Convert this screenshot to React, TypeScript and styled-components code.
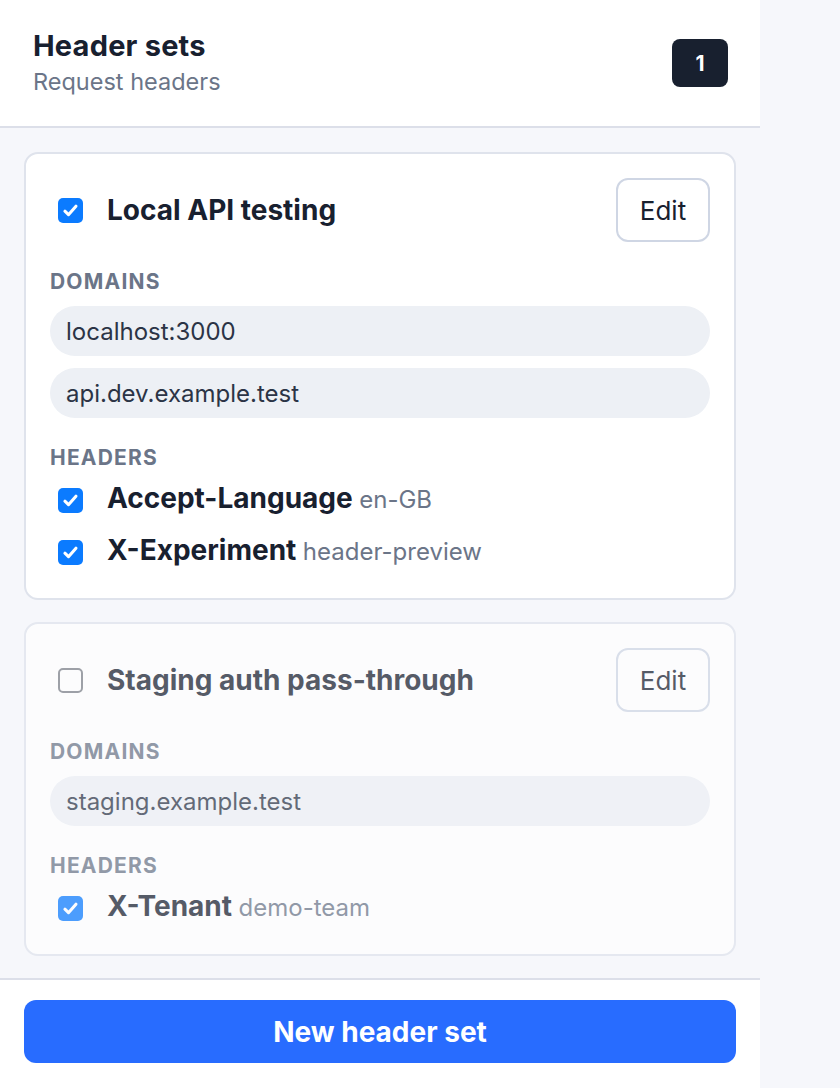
import styled, { createGlobalStyle } from 'styled-components';

const GlobalStyle = createGlobalStyle`
  html, body {
    margin: 0;
    padding: 0;
    background: #f6f7fb;
    font-family: Inter, 'Noto Sans', sans-serif;
    color: #1a2233;
  }
  * { box-sizing: border-box; }
`;

interface HeaderItem {
  name: string;
  value: string;
  enabled: boolean;
}

interface HeaderSet {
  title: string;
  enabled: boolean;
  domains: string[];
  headers: HeaderItem[];
}

const sets: HeaderSet[] = [
  {
    title: 'Local API testing',
    enabled: true,
    domains: ['localhost:3000', 'api.dev.example.test'],
    headers: [
      { name: 'Accept-Language', value: 'en-GB', enabled: true },
      { name: 'X-Experiment', value: 'header-preview', enabled: true },
    ],
  },
  {
    title: 'Staging auth pass-through',
    enabled: false,
    domains: ['staging.example.test'],
    headers: [{ name: 'X-Tenant', value: 'demo-team', enabled: true }],
  },
];

function Check({ checked }: { checked: boolean }) {
  return (
    <CheckBox checked={checked}>
      {checked && (
        <svg width="19" height="19" viewBox="0 0 16 16" fill="none">
          <path
            d="M3.3 8.6l3 2.9 6.3-7.1"
            stroke="white"
            strokeWidth="2.6"
            strokeLinecap="round"
            strokeLinejoin="round"
          />
        </svg>
      )}
    </CheckBox>
  );
}

export default function App() {
  const activeCount = sets.filter((s) => s.enabled).length;

  return (
    <>
      <GlobalStyle />
      <Sidebar>
        <Header>
          <div>
            <Title>Header sets</Title>
            <Subtitle>Request headers</Subtitle>
          </div>
          <Badge>{activeCount}</Badge>
        </Header>

        <List>
          {sets.map((set) => (
            <Card key={set.title} muted={!set.enabled}>
              <CardTop>
                <Check checked={set.enabled} />
                <CardTitle>{set.title}</CardTitle>
                <EditButton>Edit</EditButton>
              </CardTop>

              <Section>
                <SectionLabel>Domains</SectionLabel>
                <Pills>
                  {set.domains.map((d) => (
                    <Pill key={d}>{d}</Pill>
                  ))}
                </Pills>
              </Section>

              <Section>
                <SectionLabel>Headers</SectionLabel>
                <Rows>
                  {set.headers.map((h) => (
                    <HeaderRow key={h.name}>
                      <Check checked={h.enabled} />
                      <HeaderText>
                        <HeaderName>{h.name}</HeaderName> <HeaderValue>{h.value}</HeaderValue>
                      </HeaderText>
                    </HeaderRow>
                  ))}
                </Rows>
              </Section>
            </Card>
          ))}
        </List>

        <Footer>
          <PrimaryButton>New header set</PrimaryButton>
        </Footer>
      </Sidebar>
    </>
  );
}

const Sidebar = styled.div`
  width: 760px;
  height: 1088px;
  display: flex;
  flex-direction: column;
  background: #f6f7fb;
`;

const Header = styled.header`
  height: 128px;
  flex-shrink: 0;
  background: #ffffff;
  border-bottom: 2px solid #dcdfe9;
  display: flex;
  align-items: center;
  justify-content: space-between;
  padding: 0 32px 0 33px;
`;

const Title = styled.h1`
  margin: 0;
  font-size: 29px;
  line-height: 34px;
  font-weight: 700;
  color: #18202f;
  letter-spacing: 0.2px;
`;

const Subtitle = styled.div`
  margin-top: 4px;
  font-size: 23.5px;
  line-height: 30px;
  color: #6b7588;
`;

const Badge = styled.div`
  width: 56px;
  height: 48px;
  border-radius: 8px;
  background: #18202f;
  color: #ffffff;
  font-size: 21px;
  font-weight: 700;
  display: flex;
  align-items: center;
  justify-content: center;
`;

const List = styled.div`
  flex: 1;
  min-height: 0;
  display: flex;
  flex-direction: column;
  gap: 22px;
  padding: 24px 24px;
`;

const Card = styled.section<{ muted: boolean }>`
  background: #ffffff;
  border: 2px solid #dfe3ec;
  border-radius: 14px;
  padding: 24px;
  opacity: ${({ muted }) => (muted ? 0.72 : 1)};
`;

const CardTop = styled.div`
  display: flex;
  align-items: center;
  gap: 24px;
  padding-left: 8px;
  height: 64px;
`;

const CheckBox = styled.span<{ checked: boolean }>`
  width: 25px;
  height: 25px;
  flex-shrink: 0;
  border-radius: 5px;
  display: flex;
  align-items: center;
  justify-content: center;
  background: ${({ checked }) => (checked ? '#0b7bff' : '#ffffff')};
  border: ${({ checked }) => (checked ? 'none' : '2px solid #7b7f87')};
`;

const CardTitle = styled.h2`
  flex: 1;
  margin: 0;
  font-size: 28px;
  line-height: 36px;
  font-weight: 700;
  color: #18202f;
`;

const EditButton = styled.button`
  width: 94px;
  height: 64px;
  border: 2px solid #cfd6e4;
  border-radius: 12px;
  background: #ffffff;
  font-family: inherit;
  font-size: 26px;
  color: #18202f;
  padding: 0;
`;

const Section = styled.div`
  margin-top: 26px;
`;

const SectionLabel = styled.div`
  font-size: 21px;
  line-height: 28px;
  font-weight: 700;
  text-transform: uppercase;
  letter-spacing: 1.2px;
  color: #6b7588;
  margin-bottom: 10px;
`;

const Pills = styled.div`
  display: flex;
  flex-direction: column;
  gap: 12px;
`;

const Pill = styled.div`
  height: 50px;
  border-radius: 25px;
  background: #edf0f5;
  padding: 0 16px;
  display: flex;
  align-items: center;
  font-size: 24px;
  color: #2b3446;
`;

const Rows = styled.div`
  display: flex;
  flex-direction: column;
  gap: 8px;
  margin-top: -4px;
`;

const HeaderRow = styled.div`
  height: 44px;
  display: flex;
  align-items: center;
  gap: 24px;
  padding-left: 8px;
`;

const HeaderText = styled.div`
  white-space: nowrap;
  line-height: 36px;
`;

const HeaderName = styled.span`
  font-size: 28px;
  font-weight: 700;
  color: #18202f;
`;

const HeaderValue = styled.span`
  margin-left: 2px;
  font-size: 24px;
  color: #6b7588;
`;

const Footer = styled.footer`
  flex-shrink: 0;
  background: #ffffff;
  border-top: 2px solid #dcdfe9;
  padding: 20px 24px 25px;
`;

const PrimaryButton = styled.button`
  width: 100%;
  height: 63px;
  border: none;
  border-radius: 12px;
  background: #286cff;
  color: #ffffff;
  font-family: inherit;
  font-size: 28px;
  font-weight: 700;
`;
